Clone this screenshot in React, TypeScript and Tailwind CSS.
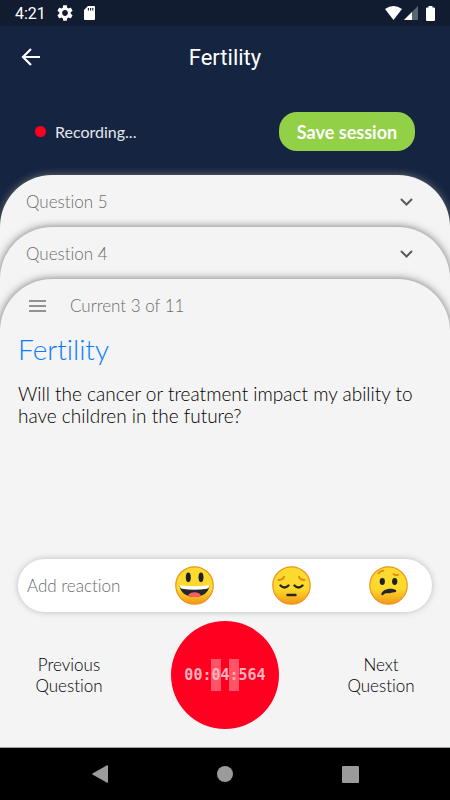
import { useState } from "react";

const previousQuestions = [
  { id: 5, label: "Question 5", card: "" },
  { id: 4, label: "Question 4", card: "-mt-[52px]" },
];

function StatusBar() {
  return (
    <div className="flex h-[26px] shrink-0 items-center justify-between bg-[#111c30] px-[15px] text-white">
      <div className="flex items-center gap-3">
        <span className="pt-[2px] font-[Roboto] text-base leading-5">4:21</span>
        <svg className="-mx-px h-4 w-4" viewBox="2 2 20 20" fill="currentColor">
          <path d="M19.14 12.94c.04-.3.06-.61.06-.94 0-.32-.02-.64-.07-.94l2.03-1.58c.18-.14.23-.41.12-.61l-1.92-3.32c-.12-.22-.37-.29-.59-.22l-2.39.96c-.5-.38-1.03-.7-1.62-.94l-.36-2.54c-.04-.24-.24-.41-.48-.41h-3.84c-.24 0-.43.17-.47.41l-.36 2.54c-.59.24-1.13.57-1.62.94l-2.39-.96c-.22-.08-.47 0-.59.22L2.74 8.87c-.12.21-.08.47.12.61l2.03 1.58c-.05.3-.09.63-.09.94s.02.64.07.94l-2.03 1.58c-.18.14-.23.41-.12.61l1.92 3.32c.12.22.37.29.59.22l2.39-.96c.5.38 1.03.7 1.62.94l.36 2.54c.05.24.24.41.48.41h3.84c.24 0 .44-.17.47-.41l.36-2.54c.59-.24 1.13-.56 1.62-.94l2.39.96c.22.08.47 0 .59-.22l1.92-3.32c.12-.22.07-.47-.12-.61l-2.01-1.58zM12 15.6c-1.98 0-3.6-1.62-3.6-3.6s1.62-3.6 3.6-3.6 3.6 1.62 3.6 3.6-1.62 3.6-3.6 3.6z" />
        </svg>
        <svg className="h-[14px] w-[11px]" viewBox="0 0 11 14">
          <path d="M4 0h6q1 0 1 1v12q0 1-1 1H1q-1 0-1-1V4z" fill="#fff" />
          <path d="M4.4 2v2.4M6.6 2v2.4M8.8 2v2.4" stroke="#111c30" strokeWidth="1.1" />
        </svg>
      </div>
      <div className="flex items-center">
        <svg className="h-[14px] w-[17px]" viewBox="0 0 17 14" fill="#fff">
          <path d="M0 3Q8.500-3 17 3L8.500 14z" />
        </svg>
        <svg className="ml-[2px] h-[14px] w-[14px]" viewBox="0 0 14 14">
          <path d="M0 14L14 0v14z" fill="#5b6473" />
          <path d="M0 14L8 6v8z" fill="#fff" />
        </svg>
        <svg className="ml-2 h-[15px] w-[9px]" viewBox="0 0 9 15" fill="#fff">
          <path d="M2.500 0h4v1.500H8q1 0 1 1V14q0 1-1 1H1q-1 0-1-1V2.500q0-1 1-1h1.500z" />
        </svg>
      </div>
    </div>
  );
}

function EmojiFace({ id, children }: { id: string; children: React.ReactNode }) {
  return (
    <svg className="h-[39px] w-[39px]" viewBox="0 0 39 39" fill="none">
      <defs>
        <linearGradient id={id} x1="0" y1="0" x2="0" y2="1">
          <stop offset="0" stopColor="#fddc2f" />
          <stop offset="0.6" stopColor="#fdd92b" />
          <stop offset="1" stopColor="#f29618" />
        </linearGradient>
      </defs>
      <circle cx="19.5" cy="19.5" r="18.700" fill={`url(#${id})`} stroke="#ee9320" strokeWidth="1.2" />
      {children}
    </svg>
  );
}

function HappyFace() {
  return (
    <EmojiFace id="happy">
      <ellipse cx="13.3" cy="11.3" rx="2.500" ry="4.900" fill="#1d2027" />
      <ellipse cx="26" cy="11.3" rx="2.500" ry="4.900" fill="#1d2027" />
      <path d="M4.500 19.500Q19.500 23 34.500 19.500C34 26 28 31 19.500 31S5 26 4.500 19.500z" fill="#25252c" />
      <path d="M4.500 19Q19.500 21.500 34.500 19c0 2-1 3.200-2.500 3.700-8 1.400-17 1.400-25 0-1.500-.5-2.500-1.700-2.500-3.700z" fill="#fff" />
      <path d="M13 29.500c2-4.200 11-4.200 13 0-4 2-9 2-13 0z" fill="#f2625c" />
    </EmojiFace>
  );
}

function PensiveFace() {
  return (
    <EmojiFace id="pensive">
      <path d="M6.500 14q4.500-.3 5.500-3.200M32.500 14q-4.500-.3-5.500-3.200" stroke="#e58a16" strokeWidth="2" strokeLinecap="round" />
      <path d="M8.500 19.500q4 4 8 0M22.500 19.500q4 4 8 0" stroke="#25252c" strokeWidth="2.400" strokeLinecap="round" />
      <path d="M15.500 29h8" stroke="#25252c" strokeWidth="2.400" strokeLinecap="round" />
    </EmojiFace>
  );
}

function ConfusedFace() {
  return (
    <EmojiFace id="confused">
      <path d="M9.500 7.500Q11 4.800 14.500 4.700M24.500 8q2 1.500 4.500.8" stroke="#e58a16" strokeWidth="1.800" strokeLinecap="round" />
      <ellipse cx="13.300" cy="15.500" rx="2.600" ry="3.400" fill="#1d2027" />
      <ellipse cx="25.700" cy="15.500" rx="2.600" ry="3.400" fill="#1d2027" />
      <path d="M12.300 28.500C12.500 23.500 21.500 21 26.800 24c1 .8.400 2.200-.8 2.200-3.300-.2-4.500 1.400-7.500 1-2-.2-3 .5-4.200 1.500-1 .8-2 .8-2-.2z" fill="#25252c" />
    </EmojiFace>
  );
}

export default function App() {
  const [open, setOpen] = useState<number | null>(null);
  const [reaction, setReaction] = useState<string | null>(null);

  return (
    <div className="flex min-h-screen flex-col bg-[#142441] font-[Lato,sans-serif] [font-variant-ligatures:none]">
      <StatusBar />

      {/* Title bar */}
      <header className="grid h-[62px] shrink-0 grid-cols-[1fr_auto_1fr] items-center px-5 text-white">
        <button aria-label="Back" className="w-fit">
          <svg className="h-[22px] w-[22px]" viewBox="0 0 22 22" fill="none" stroke="currentColor" strokeWidth="2.200">
            <path d="M20 11H3M11 3L3 11l8 8" />
          </svg>
        </button>
        <h1 className="pt-[2px] font-[Roboto] text-[22px] leading-6">Fertility</h1>
      </header>

      {/* Recording state */}
      <div className="flex items-center justify-between px-[35px] py-6">
        <div className="flex items-center gap-[9px] text-base leading-5 text-gray-200">
          <span className="h-[11px] w-[11px] rounded-full bg-[#ff0020]" />
          Recording...
        </div>
        <button className="h-[39px] w-[136px] rounded-[18px] bg-[#92d048] text-[18px] font-bold leading-5 text-white">
          Save session
        </button>
      </div>

      {/* Stacked question cards */}
      <main className="flex flex-1 flex-col text-[#6c6c6c]">
        {previousQuestions.map((q) => (
          <section
            key={q.id}
            className={`relative rounded-t-[52px] bg-[#f4f4f4] pb-[51px] shadow-[0_0_8px_#707070] ${q.card}`}
          >
            <button
              aria-expanded={open === q.id}
              onClick={() => setOpen(open === q.id ? null : q.id)}
              className="flex h-[53px] w-full items-center justify-between pl-[26px] pr-[37px] text-[17px] font-light"
            >
              {q.label}
              <svg className="h-[8px] w-[13px]" viewBox="0 0 13 8" fill="none" stroke="#5a5a5a" strokeWidth="2">
                <path d="M1 1l5.500 5.500L12 1" />
              </svg>
            </button>
          </section>
        ))}

        <section className="relative -mt-[52px] flex flex-1 flex-col rounded-t-[52px] bg-[#f4f4f4] shadow-[0_0_8px_#707070]">
          <div className="flex h-[54px] items-center gap-6 pl-[29px] text-[17px] font-light">
            <button aria-label="Question list">
              <svg className="h-3 w-[17px]" viewBox="0 0 17 12" stroke="#929292" strokeWidth="1.800">
                <path d="M0 1h17M0 6h17M0 11h17" />
              </svg>
            </button>
            Current 3 of 11
          </div>

          <div className="flex-1 px-[18px]">
            <h2 className="text-[28px] font-light leading-8 text-[#087cff]">Fertility</h2>
            <p className="mt-[18px] text-[19px] font-light leading-[22px] text-black">
              Will the cancer or treatment impact my ability to have children in the future?
            </p>
          </div>

          <div className="mx-[18px] flex h-[53px] items-center justify-between rounded-full bg-white pl-[9px] pr-6 shadow-[0_0_6px_#bbbbbb]">
            <span className="text-[17px] font-light">Add reaction</span>
            <div className="flex gap-[58px]">
              <button aria-label="Happy" aria-pressed={reaction === "happy"} onClick={() => setReaction("happy")}>
                <HappyFace />
              </button>
              <button aria-label="Sad" aria-pressed={reaction === "sad"} onClick={() => setReaction("sad")}>
                <PensiveFace />
              </button>
              <button aria-label="Confused" aria-pressed={reaction === "confused"} onClick={() => setReaction("confused")}>
                <ConfusedFace />
              </button>
            </div>
          </div>

          {/* Recorder controls */}
          <div className="grid grid-cols-[1fr_auto_1fr] items-center px-[34px] pb-[18px] pt-[9px]">
            <button className="w-[70px] justify-self-start text-[17px] font-light leading-[21px] text-black">
              Previous Question
            </button>
            <button
              aria-label="Pause recording"
              className="relative flex h-[108px] w-[108px] items-center justify-center rounded-full bg-[#ff0020]"
            >
              <svg className="h-8 w-7" viewBox="0 0 28 32" fill="#ff5468">
                <path d="M0 0h10v32H0zM18 0h10v32H18z" />
              </svg>
              <span className="absolute inset-0 flex items-center justify-center font-['DejaVu_Sans_Mono',monospace] text-[15px] font-bold text-[#ffb3bc]">
                00:04:564
              </span>
            </button>
            <button className="w-[70px] justify-self-end text-[17px] font-light leading-[21px] text-black">
              Next Question
            </button>
          </div>
        </section>
      </main>

      {/* Android navigation, above the last card's shadow */}
      <nav className="relative grid h-[53px] shrink-0 grid-cols-3 items-center border-t border-gray-400 bg-black px-[37px] text-[#9b9b9b]">
        <button aria-label="System back" className="justify-self-center">
          <svg className="h-[18px] w-4" viewBox="0 0 16 18" fill="currentColor">
            <path d="M15 .3q1-.5 1 .7v16q0 1.200-1 .7L.5 9.500q-.7-.5 0-1z" />
          </svg>
        </button>
        <button aria-label="Home" className="justify-self-center">
          <svg className="h-4 w-4" viewBox="0 0 16 16" fill="currentColor">
            <circle cx="8" cy="8" r="8" />
          </svg>
        </button>
        <button aria-label="Recent apps" className="justify-self-center">
          <svg className="h-[17px] w-[17px]" viewBox="0 0 17 17" fill="currentColor">
            <rect width="17" height="17" rx="1" />
          </svg>
        </button>
      </nav>
    </div>
  );
}
